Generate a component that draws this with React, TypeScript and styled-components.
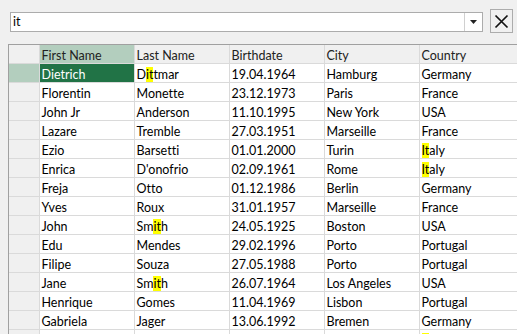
import React from "react";
import styled, { createGlobalStyle } from "styled-components";

const GlobalStyle = createGlobalStyle`
  html, body {
    margin: 0;
    padding: 0;
    background: #f0f0f0;
    overflow: hidden;
  }
  body {
    font-family: Lato, "Noto Sans", sans-serif;
    font-size: 12.5px;
    font-variant-ligatures: none;
    color: #000;
  }
`;

type Person = {
    first: string;
    last: string;
    birth: string;
    city: string;
    country: string;
};

const people: Person[] = [
    { first: "Dietrich", last: "Dittmar", birth: "19.04.1964", city: "Hamburg", country: "Germany" },
    { first: "Florentin", last: "Monette", birth: "23.12.1973", city: "Paris", country: "France" },
    { first: "John Jr", last: "Anderson", birth: "11.10.1995", city: "New York", country: "USA" },
    { first: "Lazare", last: "Tremble", birth: "27.03.1951", city: "Marseille", country: "France" },
    { first: "Ezio", last: "Barsetti", birth: "01.01.2000", city: "Turin", country: "Italy" },
    { first: "Enrica", last: "D'onofrio", birth: "02.09.1961", city: "Rome", country: "Italy" },
    { first: "Freja", last: "Otto", birth: "01.12.1986", city: "Berlin", country: "Germany" },
    { first: "Yves", last: "Roux", birth: "31.01.1957", city: "Marseille", country: "France" },
    { first: "John", last: "Smith", birth: "24.05.1925", city: "Boston", country: "USA" },
    { first: "Edu", last: "Mendes", birth: "29.02.1996", city: "Porto", country: "Portugal" },
    { first: "Filipe", last: "Souza", birth: "27.05.1988", city: "Porto", country: "Portugal" },
    { first: "Jane", last: "Smith", birth: "26.07.1964", city: "Los Angeles", country: "USA" },
    { first: "Henrique", last: "Gomes", birth: "11.04.1969", city: "Lisbon", country: "Portugal" },
    { first: "Gabriela", last: "Jager", birth: "13.06.1992", city: "Bremen", country: "Germany" },
    { first: "Paolo", last: "Rossi", birth: "05.08.1979", city: "Milan", country: "Italy" },
];

const filter = "it";

// marks the first match of the filter text in yellow
const Highlighted = ({ text }: { text: string }) => {
    const idx = text.toLowerCase().indexOf(filter);
    if (idx < 0) return <>{text}</>;
    return (
        <>
            {text.slice(0, idx)}
            <Mark>{text.slice(idx, idx + filter.length)}</Mark>
            {text.slice(idx + filter.length)}
        </>
    );
};

export default function App() {
    const selected = 0;
    return (
        <>
            <GlobalStyle />
            <Page>
                <FilterBar>
                    <Combo>
                        <ComboInput>{filter}</ComboInput>
                        <ComboButton>
                            <svg width="7" height="4" viewBox="0 0 7 4">
                                <path d="M0 0 H7 L3.5 4 Z" fill="#222" />
                            </svg>
                        </ComboButton>
                    </Combo>
                    <ClearButton>
                        <svg width="15" height="15" viewBox="0 0 15 15">
                            <path d="M1.5 1.5 L13.5 13.5 M13.5 1.5 L1.5 13.5" stroke="#111" strokeWidth="1.7" />
                        </svg>
                    </ClearButton>
                </FilterBar>

                <GridFrame>
                    <Table>
                        <colgroup>
                            <col style={{ width: 30 }} />
                            <col style={{ width: 95 }} />
                            <col style={{ width: 95 }} />
                            <col style={{ width: 95 }} />
                            <col style={{ width: 95 }} />
                            <col style={{ width: 110 }} />
                        </colgroup>
                        <thead>
                            <tr>
                                <Corner />
                                <HeadCell $active>First Name</HeadCell>
                                <HeadCell>Last Name</HeadCell>
                                <HeadCell>Birthdate</HeadCell>
                                <HeadCell>City</HeadCell>
                                <HeadCell>Country</HeadCell>
                            </tr>
                        </thead>
                        <tbody>
                            {people.map((p, i) => (
                                <tr key={i}>
                                    <RowHead $active={i === selected} />
                                    <Cell $selected={i === selected}>{p.first}</Cell>
                                    <Cell><Highlighted text={p.last} /></Cell>
                                    <Cell>{p.birth}</Cell>
                                    <Cell>{p.city}</Cell>
                                    <Cell><Highlighted text={p.country} /></Cell>
                                </tr>
                            ))}
                        </tbody>
                    </Table>
                </GridFrame>
            </Page>
        </>
    );
}

const Page = styled.div`
    width: 517px;
    height: 334px;
    display: flex;
    flex-direction: column;
    overflow: hidden;
`;

const FilterBar = styled.div`
    display: flex;
    align-items: center;
    gap: 7px;
    padding: 9px 4px 0 10px;
    height: 24px;
`;

const Combo = styled.div`
    flex: 1;
    height: 20px;
    box-sizing: border-box;
    border: 1px solid #acacac;
    background: #fff;
    display: flex;
    margin-top: 1px;
`;

const ComboInput = styled.div`
    flex: 1;
    padding-left: 2px;
    line-height: 18px;
`;

const ComboButton = styled.div`
    width: 17px;
    border-left: 1px solid #d0d0d0;
    display: flex;
    align-items: center;
    justify-content: center;
`;

const ClearButton = styled.div`
    width: 23px;
    height: 24px;
    box-sizing: border-box;
    border: 1px solid #acacac;
    background: #f0f0f0;
    display: flex;
    align-items: center;
    justify-content: center;
`;

const GridFrame = styled.div`
    margin: 11px 0 0 8px;
    border-top: 1px solid #a0a0a0;
    border-left: 1px solid #a0a0a0;
    flex: 1;
    overflow: hidden;
`;

const Table = styled.table`
    table-layout: fixed;
    border-collapse: collapse;
    width: 520px;
`;

const Corner = styled.th`
    background: #f0f0f0;
    border-right: 1px solid #dadada;
    border-bottom: 1px solid #dadada;
    height: 18px;
    padding: 0;
`;

const HeadCell = styled.th<{ $active?: boolean }>`
    background: ${(p) => (p.$active ? "#b3cebe" : "#f0f0f0")};
    border-right: 1px solid #dadada;
    border-bottom: 1px solid #dadada;
    font-weight: normal;
    text-align: left;
    padding: 2px 0 0 2px;
    height: 16px;
    line-height: 15px;
    color: #222;
    white-space: nowrap;
    overflow: hidden;
`;

const RowHead = styled.td<{ $active?: boolean }>`
    background: ${(p) => (p.$active ? "#b3cebe" : "#f0f0f0")};
    border-right: 1px solid #dadada;
    border-bottom: 1px solid #dadada;
    padding: 0;
    height: 18px;
`;

const Cell = styled.td<{ $selected?: boolean }>`
    background: ${(p) => (p.$selected ? "#217346" : "#fff")};
    color: ${(p) => (p.$selected ? "#fff" : "#000")};
    border-right: 1px solid #dadada;
    border-bottom: 1px solid #dadada;
    padding: 2px 0 0 2px;
    height: 16px;
    line-height: 15px;
    white-space: nowrap;
    overflow: hidden;
`;

const Mark = styled.span`
    background: #ffff00;
`;
